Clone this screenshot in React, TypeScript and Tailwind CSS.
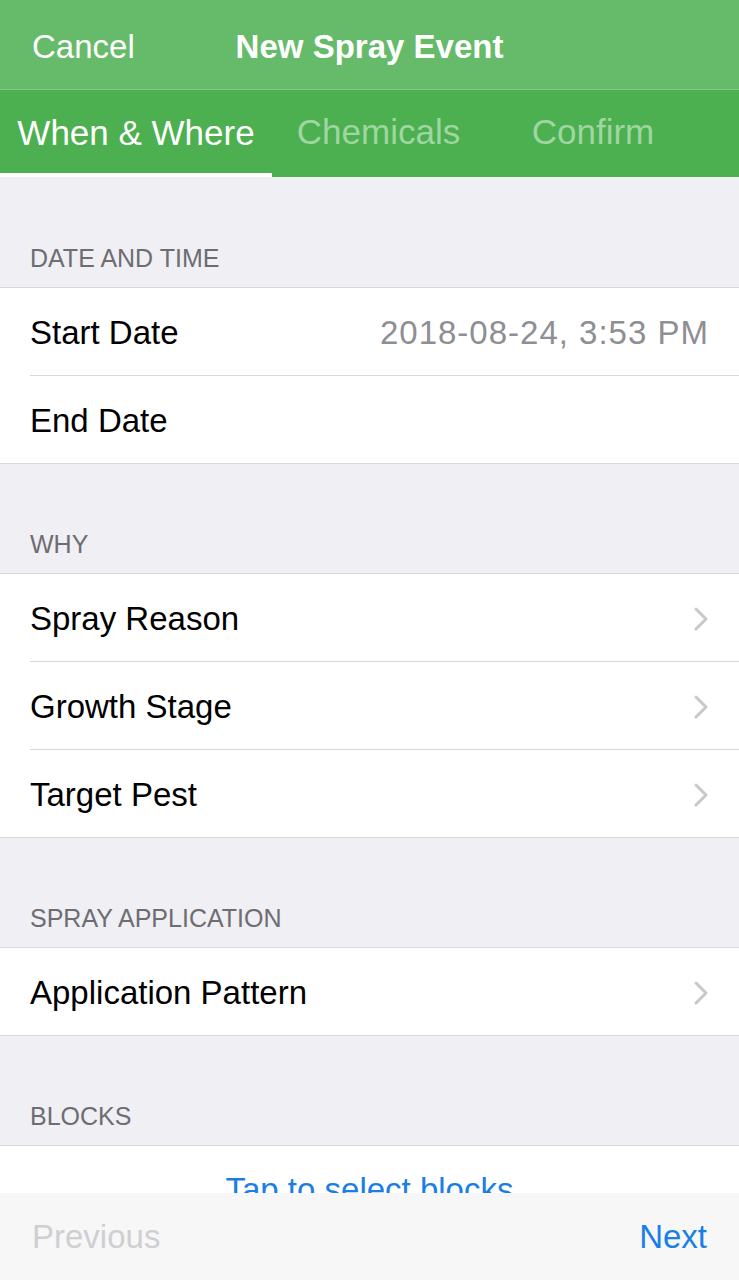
import React from "react";

const Chevron = () => (
  <svg width="16" height="26" viewBox="0 0 16 26" fill="none" className="shrink-0">
    <path d="M3 3 L13 13 L3 23" stroke="#c7c7cc" strokeWidth="3" strokeLinecap="round" strokeLinejoin="round" />
  </svg>
);

const SectionHeader = ({ title, first }: { title: string; first?: boolean }) => (
  <div
    className={
      (first ? "h-[110px] " : "h-[109px] ") +
      "flex items-end px-[30px] pb-[14px] text-[25px] leading-[30px] text-[#6d6d72]"
    }
  >
    {title}
  </div>
);

type RowProps = { label: string; value?: string; chevron?: boolean; last?: boolean };

const Row = ({ label, value, chevron, last }: RowProps) => (
  <div className="pl-[30px]">
    <div
      className={
        "flex items-center justify-between pr-[30px] pt-[2px] " +
        (last ? "h-[87px]" : "h-[88px] border-b border-[#d8d8dc]")
      }
    >
      <span className="text-[33px] text-black">{label}</span>
      {value && <span className="text-[33px] text-[#8e8e93] tracking-[1px]">{value}</span>}
      {chevron && <Chevron />}
    </div>
  </div>
);

const Group = ({ children }: { children: React.ReactNode }) => (
  <div className="bg-white border-y border-[#d8d8dc]">{children}</div>
);

export default function App() {
  return (
    <div
      className="w-[739px] h-[1280px] flex flex-col overflow-hidden bg-[#efeff4]"
      style={{ fontFamily: '"Liberation Sans", Arial, sans-serif' }}
    >
      <div className="h-[90px] shrink-0 bg-[#66bb6a] flex items-center justify-between border-b border-[#84c987] pt-[4px] px-[32px]">
        <span className="w-[150px] text-[33px] text-white">Cancel</span>
        <span className="text-[33px] font-bold text-white">New Spray Event</span>
        <span className="w-[150px]" />
      </div>
      <div className="h-[87px] shrink-0 bg-[#4caf50] flex">
        <div className="w-[272px] flex flex-col">
          <div className="flex-1 flex items-center justify-center text-[35px] text-white pt-[4px]">When &amp; Where</div>
          <div className="h-[4px] bg-white" />
        </div>
        <div className="w-[213px] flex items-center justify-center text-[35px] text-[#9fd6a1] pb-[2px]">Chemicals</div>
        <div className="w-[216px] flex items-center justify-center text-[35px] text-[#9fd6a1] pb-[2px]">Confirm</div>
      </div>

      <div className="flex-1 overflow-hidden">
        <SectionHeader title="DATE AND TIME" first />
        <Group>
          <Row label="Start Date" value="2018-08-24, 3:53 PM" />
          <Row label="End Date" last />
        </Group>

        <SectionHeader title="WHY" />
        <Group>
          <Row label="Spray Reason" chevron />
          <Row label="Growth Stage" chevron />
          <Row label="Target Pest" chevron last />
        </Group>

        <SectionHeader title="SPRAY APPLICATION" />
        <Group>
          <Row label="Application Pattern" chevron last />
        </Group>

        <SectionHeader title="BLOCKS" />
        <Group>
          <div className="h-[87px] flex items-center justify-center text-[33px] text-[#1a7ee6]">
            Tap to select blocks
          </div>
        </Group>
      </div>

      <div className="h-[87px] shrink-0 bg-[#f7f7f8] flex items-center justify-between px-[32px]">
        <span className="text-[33px] text-[#cfcfd2]">Previous</span>
        <span className="text-[33px] text-[#1a7ee6]">Next</span>
      </div>
    </div>
  );
}
